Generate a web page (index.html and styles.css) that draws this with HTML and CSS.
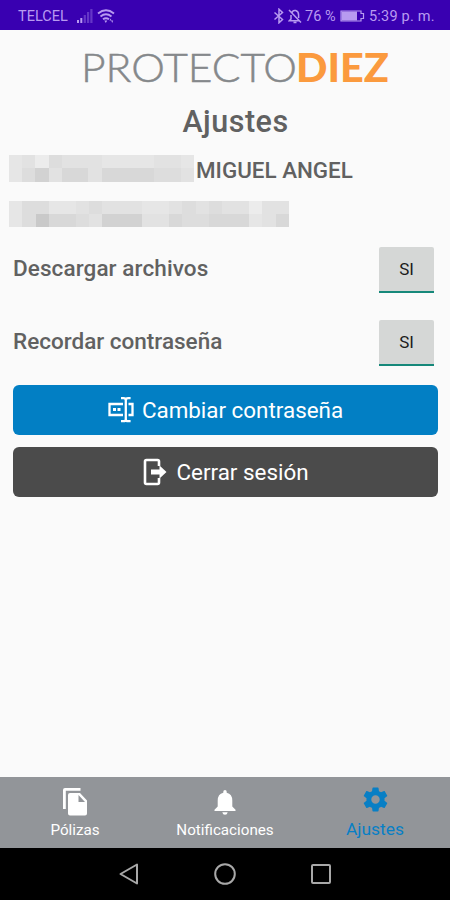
FILE: index.html
```html
<!DOCTYPE html>
<html lang="es">
<head>
<meta charset="UTF-8">
<meta name="viewport" content="width=device-width, initial-scale=1.0">
<title>Ajustes</title>
<link rel="stylesheet" href="styles.css">
</head>
<body>
<div class="phone">
  <div class="status">
    <span class="carrier">TELCEL</span>
    <svg class="signal" width="16" height="14" viewBox="0 0 16 14">
      <path d="M0 11h2v3H0zM3.3 9h2v5h-2z"/>
      <path opacity=".35" d="M6.7 6h2.2v8H6.7zM10 3h2.2v11H10zM13.3 0h2.2v14h-2.2z"/>
    </svg>
    <svg class="wifi" width="18" height="15" viewBox="0 0 18 15">
      <path d="M1 4.5Q9-2 17 4.500M3.500 7.500Q9 3 14.500 7.500M6 10.300Q9 8 12 10.300" fill="none" stroke="currentColor" stroke-width="1.9"/>
      <path d="M7.300 11.500h3L8.800 14zM12.500 11.500l1-2 1 2zM14.200 11.500h2l-1 2.500z"/>
    </svg>
    <span class="space"></span>
    <svg width="12" height="16" viewBox="0 0 12 16">
      <path d="M1.500 4.500l8 7L6 14.800V1.200l3.500 3.300-8 7" fill="none" stroke="currentColor" stroke-width="1.500"/>
    </svg>
    <svg class="mute" width="14" height="15" viewBox="0 0 14 15">
      <path d="M1 1l12 12.500M4 3.800C5-.2 10.600 1 10.600 6v3M3 6v4L1.300 11.800H11M5.500 13.500h3" fill="none" stroke="currentColor" stroke-width="1.500"/>
    </svg>
    <span class="percent">76 %</span>
    <svg class="battery" width="25" height="12" viewBox="0 0 25 12">
      <path d="M1 1h20v2.500h2.500v5H21V11H1z" fill="none" stroke="currentColor" stroke-width="1.200"/>
      <path d="M1.500 1.500H17v9H1.500z"/>
    </svg>
    <span class="clock">5:39 p. m.</span>
  </div>

  <div class="content">
    <svg class="logo" width="320" height="56" viewBox="0 0 320 56">
      <text class="protecto" x="5" y="40" textLength="216" lengthAdjust="spacingAndGlyphs">PROTECTO</text>
      <text class="diez" x="220" y="40" textLength="93" lengthAdjust="spacingAndGlyphs">DIEZ</text>
    </svg>
    <h1>Ajustes</h1>

    <div class="user">
      <div class="mosaic surname">
        <i class="c2"></i><i class="c3"></i><i class="c1"></i><i class="c4"></i><i class="c3"></i><i class="c3"></i><i class="c3"></i><i class="c2"></i><i class="c2"></i><i class="c2"></i><i class="c2"></i><i class="c3"></i><i class="c3"></i><i class="c2"></i>
        <i class="c2"></i><i class="c4"></i><i class="c6"></i><i class="c3"></i><i class="c5"></i><i class="c5"></i><i class="c3"></i><i class="c5"></i><i class="c5"></i><i class="c5"></i><i class="c5"></i><i class="c4"></i><i class="c4"></i><i class="c3"></i>
      </div>
      <span class="name">MIGUEL ANGEL</span>
    </div>
    <div class="mosaic email">
      <i class="c2"></i><i class="c4"></i><i class="c4"></i><i class="c2"></i><i class="c2"></i><i class="c3"></i><i class="c4"></i><i class="c3"></i><i class="c3"></i><i class="c3"></i><i class="c2"></i><i class="c2"></i><i class="c3"></i><i class="c4"></i><i class="c3"></i><i class="c4"></i><i class="c3"></i><i class="c3"></i><i class="c1"></i><i class="c3"></i><i class="c3"></i>
      <i class="c2"></i><i class="c4"></i><i class="c7"></i><i class="c5"></i><i class="c5"></i><i class="c4"></i><i class="c3"></i><i class="c6"></i><i class="c6"></i><i class="c6"></i><i class="c3"></i><i class="c3"></i><i class="c5"></i><i class="c4"></i><i class="c4"></i><i class="c5"></i><i class="c5"></i><i class="c5"></i><i class="c2"></i><i class="c3"></i><i class="c5"></i>
    </div>

    <div class="option">
      <span class="download">Descargar archivos</span>
      <button class="toggle">SI</button>
    </div>
    <div class="option">
      <span class="remember">Recordar contraseña</span>
      <button class="toggle">SI</button>
    </div>

    <button class="action blue">
      <svg width="26" height="26" viewBox="0 0 26 26">
        <path d="M15 7H1.500v11H15M20.500 7H24.500v11h-4M13 1.200h2.500q2.300 0 2.300 2v19q0 2-2.300 2H13M22.600 1.200h-2.500q-2.300 0-2.300 2v19q0 2 2.300 2h2.500" fill="none" stroke="currentColor" stroke-width="2.300"/>
        <path d="M5 11h3v3H5zM9.500 11h3v3h-3z"/>
      </svg>
      <span>Cambiar contraseña</span>
    </button>
    <button class="action dark">
      <svg width="26" height="28" viewBox="0 0 26 28">
        <path d="M17 8V3.500Q17 2 15.500 2h-11Q3 2 3 3.500v21Q3 26 4.500 26h11q1.500 0 1.500-1.500V20" fill="none" stroke="currentColor" stroke-width="2.600"/>
        <path d="M9 11.500h8.500V7.500l7 6.500-7 6.500v-4H9z"/>
      </svg>
      <span>Cerrar sesión</span>
    </button>
  </div>

  <div class="tabs">
    <div class="tab">
      <svg width="26" height="30" viewBox="0 0 26 30">
        <path d="M18.500 1H3Q1 1 1 3v19h2.800V3.800h14.700z"/>
        <path fill-rule="evenodd" d="M8 6h10l7 7.500V26.500q0 2-2 2H8q-2 0-2-2V8q0-2 2-2zM16.500 8v7H23z"/>
      </svg>
      <span>Pólizas</span>
    </div>
    <div class="tab">
      <svg width="22" height="30" viewBox="0 0 22 30">
        <path d="M11 3Q12.700 3 12.700 4.800V5.700Q18.300 7 18.300 13.500V19.500L21.500 22.700V24H.500V22.700L3.700 19.500V13.500Q3.700 7 9.300 5.700V4.800Q9.300 3 11 3zM8.300 25.200h5.400Q13.200 27.800 11 27.800T8.300 25.200z"/>
      </svg>
      <span>Notificaciones</span>
    </div>
    <div class="tab active">
      <svg width="29" height="29" viewBox="0 0 24 24">
        <path d="M19.430 12.980c.04-.32.07-.64.07-.98s-.03-.66-.07-.98l2.110-1.650c.19-.15.24-.42.12-.64l-2-3.460c-.12-.22-.39-.3-.61-.22l-2.490 1c-.52-.4-1.080-.73-1.690-.98l-.38-2.650C14.460 2.180 14.250 2 14 2h-4c-.25 0-.46.18-.49.42l-.38 2.650c-.61.25-1.170.59-1.690.98l-2.490-1c-.23-.09-.49 0-.61.22l-2 3.460c-.13.22-.07.49.12.64l2.110 1.650c-.04.32-.07.65-.07.98s.03.66.07.98l-2.110 1.650c-.19.15-.24.42-.12.64l2 3.460c.12.22.39.3.61.22l2.490-1c.52.4 1.080.73 1.690.98l.38 2.650c.03.24.24.42.49.42h4c.25 0 .46-.18.49-.42l.38-2.650c.61-.25 1.170-.59 1.690-.98l2.490 1c.23.09.49 0 .61-.22l2-3.460c.12-.22.07-.49-.12-.64l-2.110-1.650zM12 15.500c-1.930 0-3.500-1.570-3.500-3.500s1.570-3.500 3.500-3.500 3.500 1.570 3.500 3.500-1.570 3.500-3.500 3.500z"/>
      </svg>
      <span>Ajustes</span>
    </div>
  </div>

  <div class="navbar">
    <svg width="20" height="22" viewBox="0 0 20 22"><path d="M18 1.500v19L1.500 11z"/></svg>
    <svg width="22" height="22" viewBox="0 0 22 22"><circle cx="11" cy="11" r="9.800"/></svg>
    <svg width="20" height="20" viewBox="0 0 20 20"><rect x="1" y="1" width="18" height="18" rx="1"/></svg>
  </div>
</div>
</body>
</html>
```
FILE: styles.css
```css
body {
  margin: 0;
  font-family: Roboto, sans-serif;
  color: #616161;
  background: #fafafa;
}
.phone {
  width: 450px;
  height: 900px;
  display: flex;
  flex-direction: column;
  overflow: hidden;
}
svg {
  display: block;
  flex: none;
  fill: currentColor;
}
button {
  font-family: inherit;
  border: none;
  padding: 0;
}
.status {
  height: 30px;
  box-sizing: border-box;
  padding: 2px 15px 0 18px;
  display: flex;
  align-items: center;
  background: #3900b1;
  color: #b89af0;
  font-size: 14.5px;
  white-space: nowrap;
}
.carrier {
  width: 59px;
}
.wifi {
  margin-left: 4px;
}
.space {
  flex: 1;
}
.mute {
  margin-left: 3px;
}
.percent {
  margin-left: 3px;
  width: 32px;
}
.battery {
  margin: 0 4px 0 3px;
}
.clock {
  width: 66px;
  letter-spacing: 0.2px;
}
.content {
  flex: 1;
  padding: 12px 12px 0 13px;
}
.logo {
  margin-left: 63px;
}
.protecto, .diez {
  font-family: Lato, sans-serif;
  font-size: 40px;
}
.protecto {
  font-weight: 300;
  fill: #85888b;
  stroke: #85888b;
  stroke-width: 0.5px;
}
.diez {
  font-weight: 900;
  fill: #fb9a3e;
}
h1 {
  margin: 5px 0 0;
  padding-left: 20px;
  font-size: 30.5px;
  line-height: 38px;
  font-weight: 500;
  letter-spacing: 0.5px;
  text-align: center;
}
.user {
  display: flex;
  height: 30px;
  margin: 14px 0 0 -4px;
}
.mosaic {
  display: grid;
  grid-template-rows: 13px 14px;
}
.surname {
  width: 185px;
  grid-template-columns: repeat(14, 1fr);
}
.email {
  width: 280px;
  margin: 16px 0 0 -4px;
  grid-template-rows: 13px 13px;
  grid-template-columns: repeat(21, 1fr);
}
.c1 { background: #ececec; }
.c2 { background: #e6e6e6; }
.c3 { background: #e2e2e2; }
.c4 { background: #dddddd; }
.c5 { background: #d8d8d8; }
.c6 { background: #d2d2d2; }
.c7 { background: #c9c9c9; }
.name {
  margin-left: 2px;
  font-size: 22.4px;
  line-height: 31px;
  font-weight: 500;
}
.option {
  display: flex;
  justify-content: space-between;
  height: 46px;
  margin: 20px 4px 0 0;
  font-size: 22.5px;
  line-height: 43px;
  font-weight: 500;
}
.download {
  letter-spacing: 0.1px;
}
.option + .option {
  margin-top: 27px;
}
.toggle {
  width: 55px;
  height: 46px;
  background: #d5d7d6;
  border-bottom: 2px solid #16887a;
  border-radius: 2px 2px 0 0;
  color: #1c1c1c;
  font-size: 17px;
}
.action {
  width: 100%;
  height: 50px;
  display: flex;
  align-items: center;
  justify-content: center;
  gap: 8px;
  border-radius: 6px;
  color: #fff;
  font-size: 22.4px;
}
.blue {
  margin-top: 19px;
  background: #027fc4;
}
.dark {
  margin-top: 12px;
  background: #4b4b4b;
}
.tabs {
  height: 71px;
  display: grid;
  grid-template-columns: repeat(3, 1fr);
  background: #929599;
  color: #fff;
}
.tab {
  display: flex;
  flex-direction: column;
  align-items: center;
  padding-top: 10px;
  font-size: 15.2px;
}
.tab span {
  line-height: 20px;
  margin-top: 3px;
}
.active {
  padding-top: 8px;
  color: #087fc5;
  font-size: 17.4px;
}
.active span {
  margin-top: 5px;
}
.navbar {
  height: 52px;
  display: flex;
  align-items: center;
  justify-content: center;
  gap: 75px;
  background: #000;
}
.navbar svg {
  fill: none;
  stroke: #a8a8a8;
  stroke-width: 2;
  stroke-linejoin: round;
}
```
